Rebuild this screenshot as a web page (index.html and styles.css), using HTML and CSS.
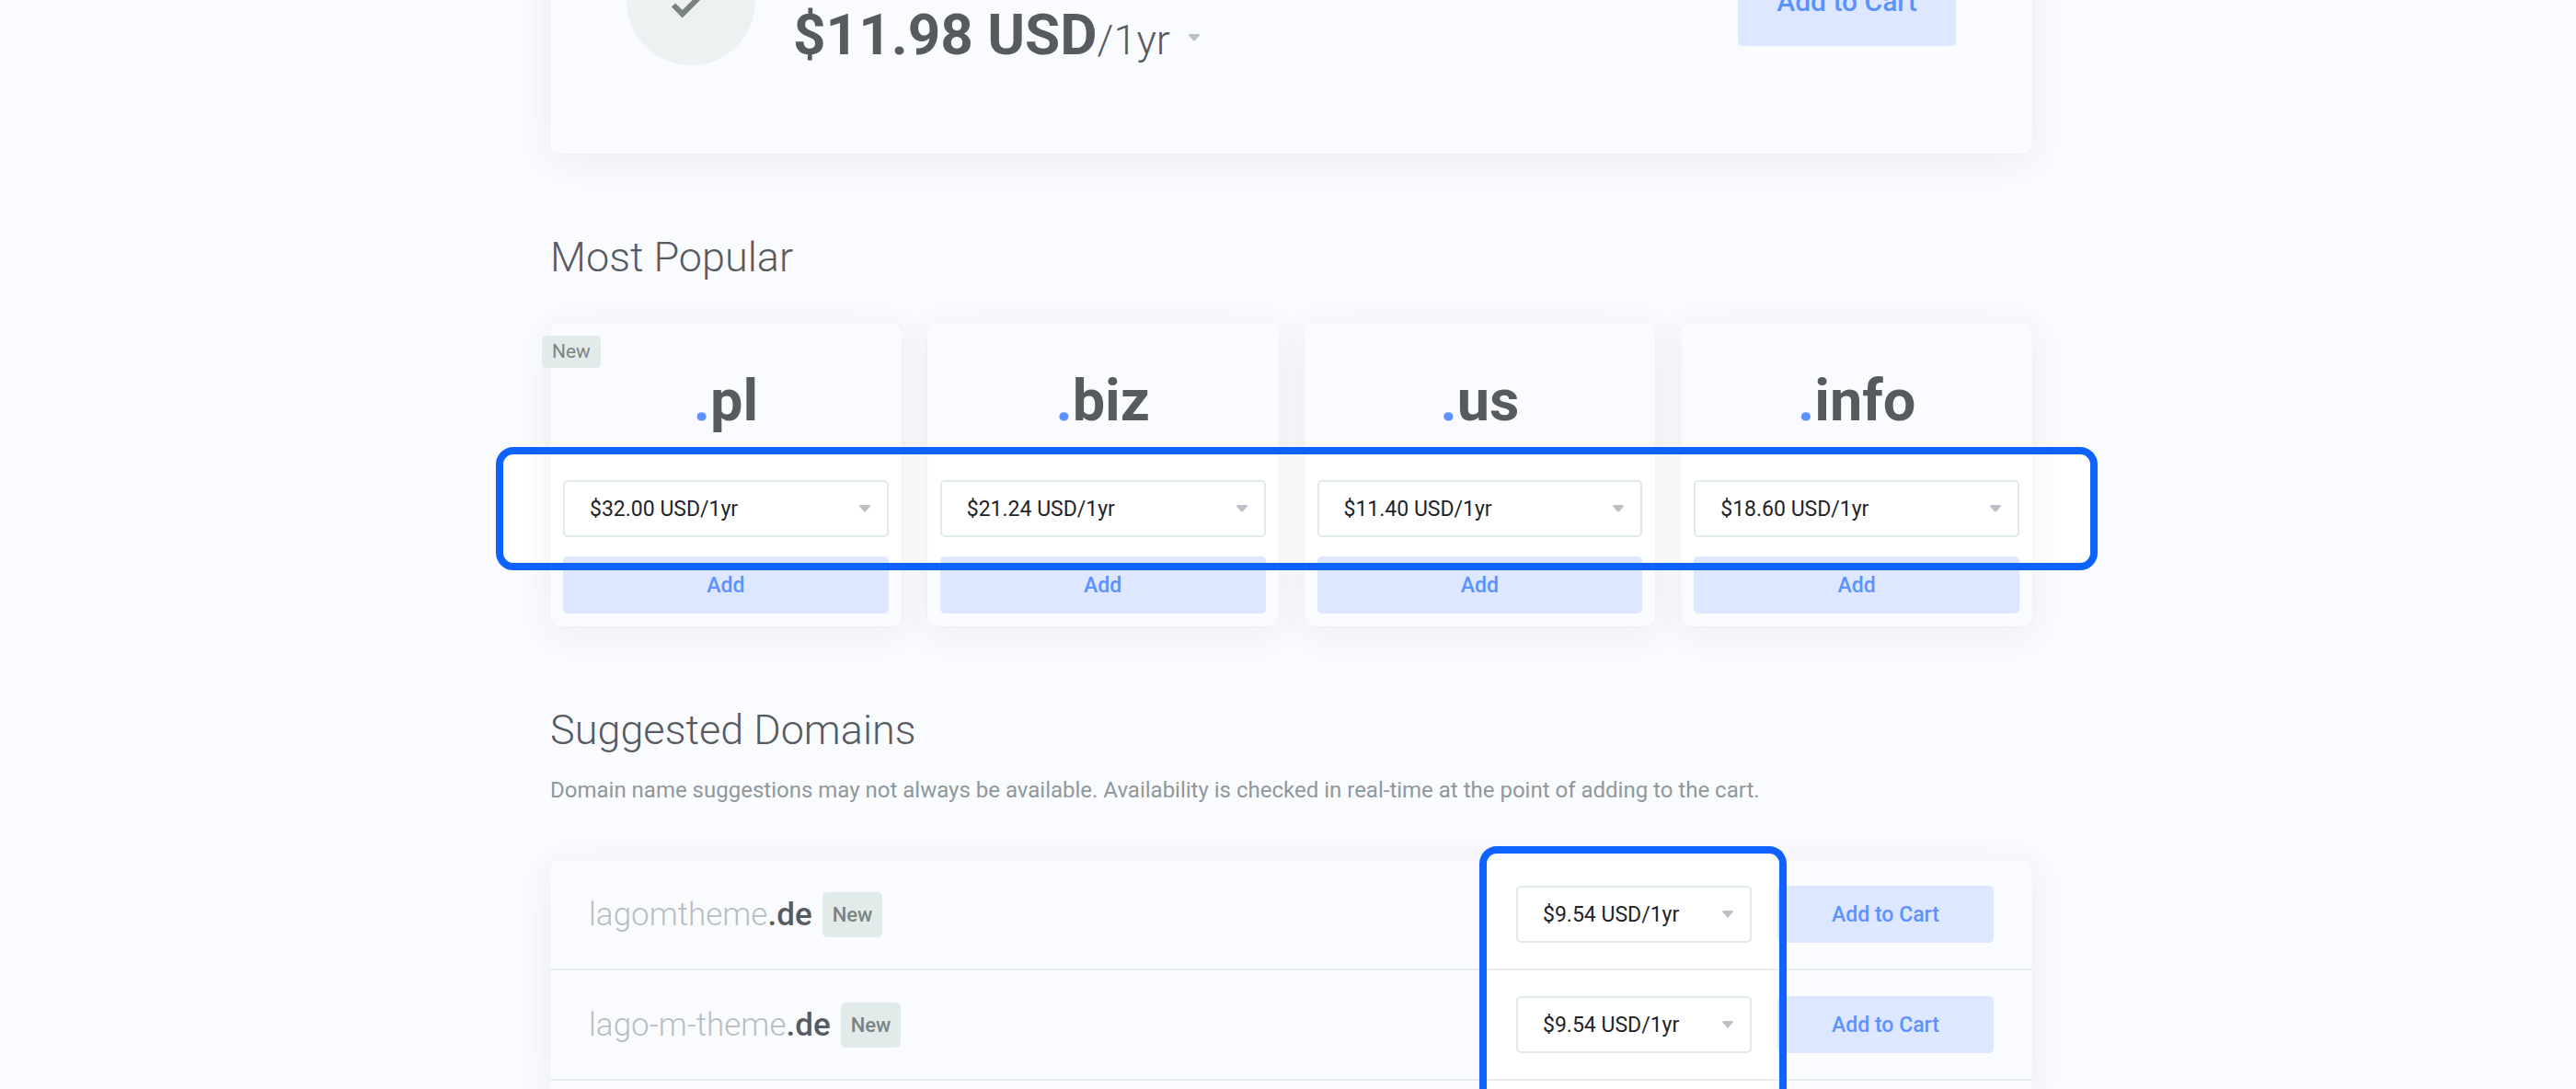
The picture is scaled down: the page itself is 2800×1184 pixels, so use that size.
FILE: index.html
```html
<!DOCTYPE html>
<html lang="en">
<head>
<meta charset="utf-8">
<meta name="viewport" content="width=device-width, initial-scale=1">
<title>Domain search</title>
<link rel="stylesheet" href="styles.css">
</head>
<body>
<main class="page">
  <section class="result card">
    <span class="result-status">
      <svg class="check" viewBox="0 0 44 34" aria-hidden="true"><path d="M3 21.500 12.700 31.200 41 3"/></svg>
    </span>
    <button type="button" class="result-price"><strong>$11.98 USD</strong><span class="result-period">/1yr</span><svg class="caret" viewBox="0 0 12 8" aria-hidden="true"><path d="M1 0H11Q12.500 1 11.500 2L7 7Q6 8 5 7L.5 2Q-.5 1 1 0Z"/></svg></button>
    <button type="button" class="btn btn-large">Add to Cart</button>
  </section>

  <h2 class="title">Most Popular</h2>
  <section class="popular">
    <article class="tld card">
      <span class="badge badge-corner">New</span>
      <h3 class="tld-name"><span class="dot">.</span>pl</h3>
      <div class="picker"><select class="select" aria-label="Price for .pl"><option>$32.00 USD/1yr</option></select><svg class="caret" viewBox="0 0 12 8" aria-hidden="true"><path d="M1 0H11Q12.500 1 11.500 2L7 7Q6 8 5 7L.5 2Q-.5 1 1 0Z"/></svg></div>
      <button type="button" class="btn">Add</button>
    </article>
    <article class="tld card">
      <h3 class="tld-name"><span class="dot">.</span>biz</h3>
      <div class="picker"><select class="select" aria-label="Price for .biz"><option>$21.24 USD/1yr</option></select><svg class="caret" viewBox="0 0 12 8" aria-hidden="true"><path d="M1 0H11Q12.500 1 11.500 2L7 7Q6 8 5 7L.5 2Q-.5 1 1 0Z"/></svg></div>
      <button type="button" class="btn">Add</button>
    </article>
    <article class="tld card">
      <h3 class="tld-name"><span class="dot">.</span>us</h3>
      <div class="picker"><select class="select" aria-label="Price for .us"><option>$11.40 USD/1yr</option></select><svg class="caret" viewBox="0 0 12 8" aria-hidden="true"><path d="M1 0H11Q12.500 1 11.500 2L7 7Q6 8 5 7L.5 2Q-.5 1 1 0Z"/></svg></div>
      <button type="button" class="btn">Add</button>
    </article>
    <article class="tld card">
      <h3 class="tld-name"><span class="dot">.</span>info</h3>
      <div class="picker"><select class="select" aria-label="Price for .info"><option>$18.60 USD/1yr</option></select><svg class="caret" viewBox="0 0 12 8" aria-hidden="true"><path d="M1 0H11Q12.500 1 11.500 2L7 7Q6 8 5 7L.5 2Q-.5 1 1 0Z"/></svg></div>
      <button type="button" class="btn">Add</button>
    </article>
    <div class="highlight highlight-popular"></div>
  </section>

  <h2 class="title">Suggested Domains</h2>
  <p class="note">Domain name suggestions may not always be available. Availability is checked in real-time at the point of adding to the cart.</p>
  <section class="suggested card">
    <div class="row">
      <span class="domain">lagomtheme<strong>.de</strong></span>
      <span class="badge badge-row">New</span>
      <div class="picker picker-row"><select class="select" aria-label="Price for lagomtheme.de"><option>$9.54 USD/1yr</option></select><svg class="caret" viewBox="0 0 12 8" aria-hidden="true"><path d="M1 0H11Q12.500 1 11.500 2L7 7Q6 8 5 7L.5 2Q-.5 1 1 0Z"/></svg></div>
      <button type="button" class="btn btn-row">Add to Cart</button>
    </div>
    <div class="row">
      <span class="domain">lago-m-theme<strong>.de</strong></span>
      <span class="badge badge-row">New</span>
      <div class="picker picker-row"><select class="select" aria-label="Price for lago-m-theme.de"><option>$9.54 USD/1yr</option></select><svg class="caret" viewBox="0 0 12 8" aria-hidden="true"><path d="M1 0H11Q12.500 1 11.500 2L7 7Q6 8 5 7L.5 2Q-.5 1 1 0Z"/></svg></div>
      <button type="button" class="btn btn-row">Add to Cart</button>
    </div>
    <div class="highlight highlight-suggested"></div>
  </section>
</main>
</body>
</html>
```
FILE: styles.css
```css
* { box-sizing: border-box; }

body {
  margin: 0;
  padding-left: 7px;
  background: #fafbff;
  color: #575b5f;
  font-family: Roboto, "Liberation Sans", sans-serif;
  font-size: 24px;
}

h2, h3, p { margin: 0; }
button, select { font: inherit; }

.page {
  max-width: 1611px;
  margin: -165px auto 0;
}

.card {
  position: relative;
  border-radius: 10px;
  box-shadow: 0 0 2px rgba(30, 50, 60, .05), 0 7px 40px rgba(40, 60, 70, .07);
}

.result {
  display: flex;
  align-items: center;
  padding: 96px 83px;
  margin-bottom: 82px;
}

.result-status {
  display: grid;
  place-items: center;
  width: 140px;
  height: 140px;
  border-radius: 50%;
  background: #ecf2f2;
}

.check {
  width: 44px;
  height: 34px;
  overflow: visible;
  fill: none;
  stroke: #7b8482;
  stroke-width: 6px;
}

.result-price {
  display: flex;
  align-items: baseline;
  align-self: flex-end;
  margin-left: 41px;
  padding: 0;
  border: 0;
  background: none;
  color: inherit;
  font-size: 62px;
  line-height: 54px;
}

.result-price strong { font-weight: 700; }
.result-period { font-size: 45px; font-weight: 300; }
.result-price .caret { align-self: center; margin: 0 0 0 20px; }

.caret {
  display: block;
  width: 12px;
  height: 8px;
  fill: #bac0c7;
}

.btn {
  height: 62px;
  padding: 0;
  border: 0;
  border-radius: 5px;
  background: #dde7ff;
  color: #5b92ff;
  font-size: 23px;
  font-weight: 500;
}

.btn-large {
  width: 237px;
  height: 98px;
  margin-left: auto;
  font-size: 30px;
}

.title {
  font-size: 45px;
  line-height: 62px;
  font-weight: 300;
}

.popular {
  position: relative;
  display: grid;
  grid-template-columns: repeat(4, 1fr);
  gap: 28px;
  margin: 40px 0 82px;
}

.tld {
  display: flex;
  flex-direction: column;
  padding: 14px;
}

.tld-name {
  padding: 33px 0 49px;
  font-size: 63px;
  line-height: 75px;
  font-weight: 700;
  text-align: center;
}

.dot { color: #5b92ff; }

.picker {
  position: relative;
  margin-bottom: 21px;
}

.select {
  appearance: none;
  display: block;
  width: 100%;
  height: 62px;
  padding: 0 27px;
  border: 2px solid #e0eae9;
  border-radius: 5px;
  background: #fff;
  color: #1f2328;
  font-size: 23px;
}

.picker .caret {
  position: absolute;
  top: 27px;
  right: 20px;
  pointer-events: none;
}

.badge {
  border-radius: 5px;
  background: #e1ebea;
  color: #7b8482;
}

.badge-corner {
  position: absolute;
  top: 14px;
  left: -9px;
  padding: 0 11px;
  font-size: 21px;
  line-height: 35px;
}

.note {
  margin: 16px 0 58px;
  color: #8f989b;
  line-height: 36px;
}

.suggested {
  padding-bottom: 9px;
  border-radius: 10px 10px 0 0;
}

.row {
  display: flex;
  align-items: center;
  height: 120px;
  padding: 0 42px;
  border-bottom: 2px solid #e8eef0;
}

.domain {
  color: #b6bec1;
  font-size: 35px;
  font-weight: 300;
}

.domain strong { color: #575b5f; font-weight: 500; }

.badge-row {
  margin-left: 11px;
  padding: 0 11px;
  font-size: 22px;
  line-height: 49px;
  font-weight: 500;
}

.picker-row {
  width: 256px;
  margin: 0 28px 0 auto;
}

.btn-row { width: 235px; }

.highlight {
  position: absolute;
  border: 8px solid #0f62fe;
  border-radius: 19px;
  pointer-events: none;
}

/* White fill sits behind the cards while the frame stays on top. */
.highlight::before {
  content: "";
  position: absolute;
  inset: 0;
  z-index: -1;
  border-radius: 11px;
  background: #fff;
}

.highlight-popular {
  top: 135px;
  left: -59px;
  right: -71px;
  height: 134px;
}

.highlight-suggested {
  top: -15px;
  right: 267px;
  bottom: 0;
  width: 334px;
  border-bottom: 0;
  border-radius: 19px 19px 0 0;
}

.highlight-suggested::before { border-radius: 11px 11px 0 0; }
```
